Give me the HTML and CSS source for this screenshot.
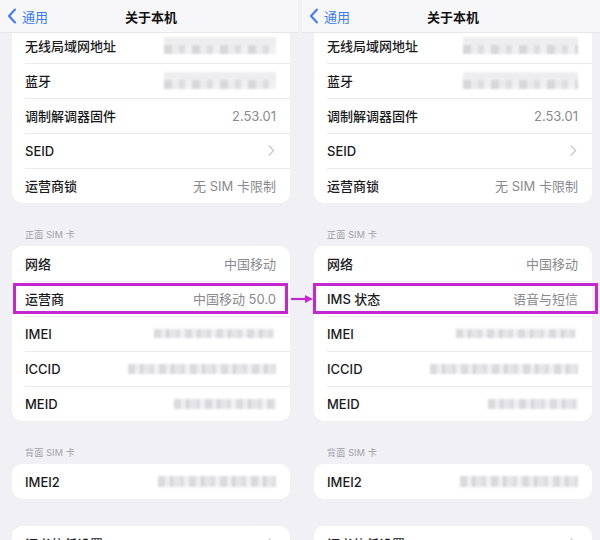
FILE: index.html
```html
<!DOCTYPE html>
<html lang="zh">
<head>
<meta charset="utf-8">
<link rel="stylesheet" href="styles.css">
</head>
<body>
<div class="stage">
  <section class="screen">
    <header class="nav">
      <span class="back"><svg width="10" height="16" viewBox="0 0 10 16"><path d="M8 1.5 L2 8 L8 14.5" fill="none" stroke="#3a7bef" stroke-width="2" stroke-linecap="round" stroke-linejoin="round"/></svg>通用</span>
      <span class="title">关于本机</span>
    </header>
    <div class="card first">
      <div class="row"><span class="label">无线局域网地址</span><span class="mask tall m1"></span></div>
      <div class="row"><span class="label">蓝牙</span><span class="mask tall m1"></span></div>
      <div class="row"><span class="label">调制解调器固件</span><span class="value">2.53.01</span></div>
      <div class="row"><span class="label">SEID</span><svg class="chev" width="7" height="11" viewBox="0 0 7 11"><path d="M1.2 1 L5.6 5.5 L1.2 10" fill="none" stroke="#c7c7cc" stroke-width="1.3" stroke-linecap="round" stroke-linejoin="round"/></svg></div>
      <div class="row"><span class="label">运营商锁</span><span class="value">无 SIM 卡限制</span></div>
    </div>
    <div class="section-head">正面 SIM 卡</div>
    <div class="card">
      <div class="row"><span class="label">网络</span><span class="value">中国移动</span></div>
      <div class="row hl-left"><span class="label">运营商</span><span class="value">中国移动 50.0</span><span class="hl"></span></div>
      <div class="row"><span class="label">IMEI</span><span class="mask m-imei"></span></div>
      <div class="row"><span class="label">ICCID</span><span class="mask m-iccid"></span></div>
      <div class="row"><span class="label">MEID</span><span class="mask m-meid"></span></div>
    </div>
    <div class="section-head">背面 SIM 卡</div>
    <div class="card">
      <div class="row"><span class="label">IMEI2</span><span class="mask m-imei2"></span></div>
    </div>
    <div class="card last">
      <div class="row"><span class="label">证书信任设置</span><svg class="chev" width="7" height="11" viewBox="0 0 7 11"><path d="M1.2 1 L5.6 5.5 L1.2 10" fill="none" stroke="#c7c7cc" stroke-width="1.3" stroke-linecap="round" stroke-linejoin="round"/></svg></div>
    </div>
  </section>

  <section class="screen">
    <header class="nav">
      <span class="back"><svg width="10" height="16" viewBox="0 0 10 16"><path d="M8 1.5 L2 8 L8 14.5" fill="none" stroke="#3a7bef" stroke-width="2" stroke-linecap="round" stroke-linejoin="round"/></svg>通用</span>
      <span class="title">关于本机</span>
    </header>
    <div class="card first">
      <div class="row"><span class="label">无线局域网地址</span><span class="mask tall m2"></span></div>
      <div class="row"><span class="label">蓝牙</span><span class="mask tall m2"></span></div>
      <div class="row"><span class="label">调制解调器固件</span><span class="value">2.53.01</span></div>
      <div class="row"><span class="label">SEID</span><svg class="chev" width="7" height="11" viewBox="0 0 7 11"><path d="M1.2 1 L5.6 5.5 L1.2 10" fill="none" stroke="#c7c7cc" stroke-width="1.3" stroke-linecap="round" stroke-linejoin="round"/></svg></div>
      <div class="row"><span class="label">运营商锁</span><span class="value">无 SIM 卡限制</span></div>
    </div>
    <div class="section-head">正面 SIM 卡</div>
    <div class="card">
      <div class="row"><span class="label">网络</span><span class="value">中国移动</span></div>
      <div class="row hl-right"><span class="label">IMS 状态</span><span class="value">语音与短信</span><span class="hl"></span></div>
      <div class="row"><span class="label">IMEI</span><span class="mask m-imei"></span></div>
      <div class="row"><span class="label">ICCID</span><span class="mask m-iccid"></span></div>
      <div class="row"><span class="label">MEID</span><span class="mask m-meid2"></span></div>
    </div>
    <div class="section-head">背面 SIM 卡</div>
    <div class="card">
      <div class="row"><span class="label">IMEI2</span><span class="mask m-imei2"></span></div>
    </div>
    <div class="card last">
      <div class="row"><span class="label">证书信任设置</span><svg class="chev" width="7" height="11" viewBox="0 0 7 11"><path d="M1.2 1 L5.6 5.5 L1.2 10" fill="none" stroke="#c7c7cc" stroke-width="1.3" stroke-linecap="round" stroke-linejoin="round"/></svg></div>
    </div>
  </section>

  <svg class="arrow" width="24" height="10" viewBox="0 0 24 10"><path d="M0 5 H16" stroke="#c426d0" stroke-width="2.2"/><path d="M14 1 L22 5 L14 9 Z" fill="#c426d0"/></svg>
</div>
</body>
</html>
```

FILE: styles.css
```css
* { box-sizing: border-box; }
html, body {
  margin: 0;
  padding: 0;
  background: #f0f0f5;
}
body {
  font-family: Inter, "Noto Sans CJK SC", sans-serif;
  color: #161618;
}
.stage {
  position: relative;
  width: 600px;
  height: 540px;
  overflow: hidden;
  display: flex;
  gap: 4px;
}
.screen {
  width: 298px;
  flex: none;
  display: flex;
  flex-direction: column;
  background: #f0f0f5;
}
.nav {
  position: relative;
  z-index: 2;
  height: 33px;
  flex: none;
  background: #f7f7f9;
  border-bottom: 1px solid #e6e6ea;
  display: flex;
  align-items: center;
  justify-content: center;
}
.back {
  position: absolute;
  left: 7px;
  top: 0;
  height: 32px;
  display: flex;
  align-items: center;
  gap: 5px;
  color: #3a7bef;
  font-size: 13px;
}
.title {
  font-size: 13px;
  font-weight: 700;
  color: #111;
  margin-left: 4px;
}
.card {
  background: #fff;
  border-radius: 10px;
  margin: 0 8px 0 12px;
  flex: none;
}
.card.first {
  margin-top: -5px;
  border-top-left-radius: 0;
  border-top-right-radius: 0;
}
.card.last {
  margin-top: 27px;
}
.row {
  position: relative;
  height: 35px;
  display: flex;
  align-items: center;
  justify-content: space-between;
  padding: 0 14px 0 13px;
  font-size: 13px;
}
.row + .row::before {
  content: "";
  position: absolute;
  left: 13px;
  right: 0;
  top: 0;
  height: 1px;
  background: #ebebee;
}
.label {
  color: #1a1a1c;
  font-weight: 500;
  white-space: nowrap;
}
.value {
  color: #8a8a8e;
  white-space: nowrap;
}
.chev {
  margin-right: 1px;
}
.section-head {
  flex: none;
  padding: 26px 0 5px 25px;
  font-size: 9px;
  line-height: 12px;
  color: #a0a0a6;
  letter-spacing: 0.2px;
}
.mask {
  display: block;
  height: 9px;
  filter: blur(1.3px);
  background:
    repeating-linear-gradient(90deg, #d6d6da 0 7px, #ececef 7px 12px, #cfcfd3 12px 15px, #e3e3e7 15px 22px, #d9d9dd 22px 26px, #f0f0f3 26px 31px);
  opacity: 0.9;
}
.mask.tall {
  height: 17px;
  background:
    linear-gradient(#ececef 0 45%, transparent 45%),
    repeating-linear-gradient(90deg, #d3d3d7 0 8px, #e9e9ec 8px 15px, #dadade 15px 21px, #efeff2 21px 28px);
}
.mask.m1 { width: 112px; }
.mask.m2 { width: 115px; }
.m-imei { width: 120px; margin-right: 2px; }
.m-iccid { width: 148px; height: 10px; }
.m-meid { width: 102px; height: 10px; }
.m-meid2 { width: 90px; height: 10px; }
.m-imei2 { width: 118px; height: 11px; }
.hl {
  position: absolute;
  top: 2px;
  bottom: 2px;
  border: 3px solid #c426d0;
  pointer-events: none;
}
.hl-left .hl { left: 1px; right: 2px; }
.hl-right .hl { left: -1px; right: -6px; }
.arrow {
  position: absolute;
  left: 291px;
  top: 294px;
  z-index: 3;
}
```
